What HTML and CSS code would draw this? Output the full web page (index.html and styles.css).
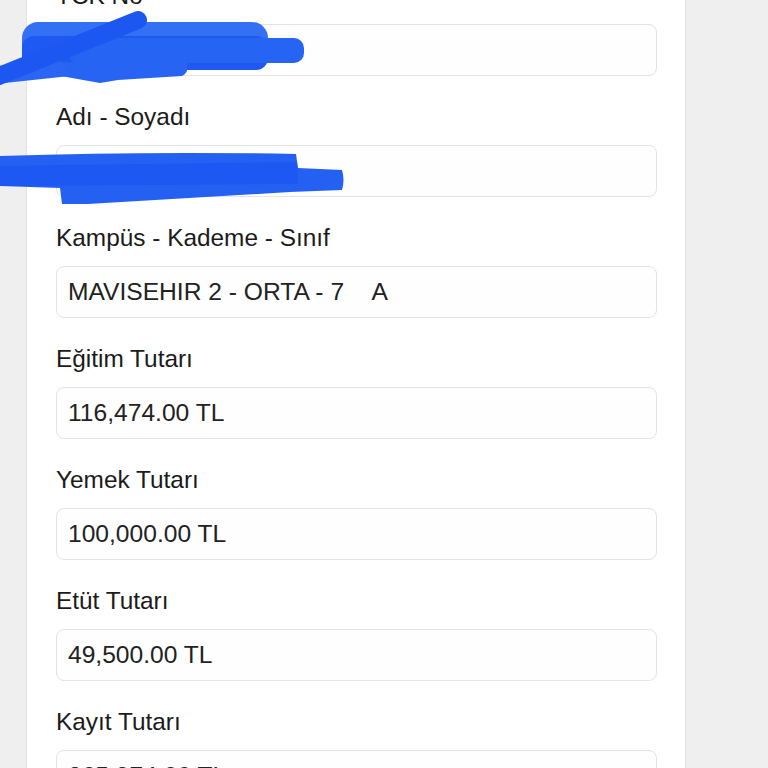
FILE: index.html
```html
<!DOCTYPE html>
<html lang="tr">
<head>
<meta charset="utf-8">
<title>Öğrenci Bilgileri</title>
<link rel="stylesheet" href="styles.css">
</head>
<body>
<main class="card">
  <div class="field">
    <label class="label">TCK No</label>
    <div class="input"></div>
  </div>
  <div class="field">
    <label class="label">Adı - Soyadı</label>
    <div class="input"></div>
  </div>
  <div class="field">
    <label class="label">Kampüs - Kademe - Sınıf</label>
    <div class="input">MAVISEHIR 2 - ORTA - 7&nbsp;&nbsp;&nbsp;&nbsp;A</div>
  </div>
  <div class="field">
    <label class="label">Eğitim Tutarı</label>
    <div class="input">116,474.00 TL</div>
  </div>
  <div class="field">
    <label class="label">Yemek Tutarı</label>
    <div class="input">100,000.00 TL</div>
  </div>
  <div class="field">
    <label class="label">Etüt Tutarı</label>
    <div class="input">49,500.00 TL</div>
  </div>
  <div class="field">
    <label class="label">Kayıt Tutarı</label>
    <div class="input">265,974.00 TL</div>
  </div>
</main>
<svg class="redact" width="768" height="768" viewBox="0 0 768 768" aria-hidden="true">
  <g>
    <rect x="22" y="22" width="246" height="48" rx="16" fill="#3370f4"/>
    <rect x="22" y="36" width="246" height="34" rx="12" fill="#1e5af1"/>
    <rect x="68" y="38" width="236" height="25" rx="10" fill="#2664f3"/>
    <path d="M40 62 L186 62 Q190 72 182 76 L118 80 L100 83 L72 78 L40 72 Z" fill="#2864f3"/>
    <path d="M-4 66 L60 60 L70 76 L-4 84 Z" fill="#2a66f3"/>
    <line x1="-6" y1="78" x2="138" y2="20" stroke="#1c57f1" stroke-width="18" stroke-linecap="round"/>
  </g>
  <g>
    <path d="M0 156 Q150 151 296 154 L298 168 L342 170 Q345 180 342 190 L290 192 L88 204 L62 204 L60 188 L0 186 Z" fill="#2461f3"/>
    <path d="M0 166 L297 162 L298 184 L0 186 Z" fill="#1c58f1"/>
  </g>
</svg>
</body>
</html>
```

FILE: styles.css
```css
html, body {
  margin: 0;
  padding: 0;
}

body {
  background: #efefef;
  font-family: "Liberation Sans", Arial, Helvetica, sans-serif;
  color: #1b1b1b;
  height: 768px;
  overflow: hidden;
}

.card {
  box-sizing: border-box;
  width: 660px;
  margin: -18px 0 0 26px;
  padding: 0 28px 40px 29px;
  background: #ffffff;
  border-left: 1px solid #e2e2e2;
  border-right: 1px solid #e2e2e2;
}

.field {
  display: flex;
  flex-direction: column;
  padding-bottom: 27px;
}

.label {
  display: block;
  font-size: 24.4px;
  line-height: 28px;
  height: 28px;
  margin-bottom: 14px;
  color: #1b1b1b;
}

.input {
  box-sizing: border-box;
  height: 52px;
  border: 1.5px solid #e3e3e3;
  border-radius: 8px;
  background: #fefefe;
  padding: 0 11px;
  font-size: 24.6px;
  line-height: 49px;
  color: #222222;
  white-space: nowrap;
}

.redact {
  position: absolute;
  top: 0;
  left: 0;
  pointer-events: none;
}
```
